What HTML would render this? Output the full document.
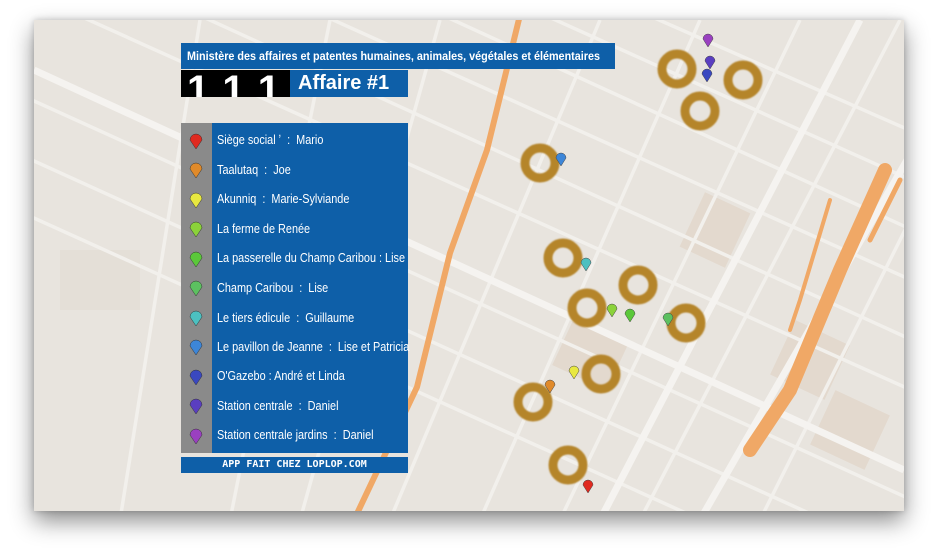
<!DOCTYPE html>
<html><head><meta charset="utf-8"><style>
html,body{margin:0;width:939px;height:559px;overflow:hidden}
body{background:#fff;font-family:"Liberation Sans",sans-serif;position:relative}
#win{position:absolute;left:34px;top:20px;width:870px;height:491px;overflow:hidden;background:#e9e5df;box-shadow:0 10px 22px rgba(0,0,0,.45),0 0 6px rgba(0,0,0,.2)}
svg{position:absolute;left:0;top:0}
.bl{position:absolute;background:#0e5fa8;color:#fff;white-space:nowrap;overflow:hidden}
.t{font-weight:bold}
.row{position:absolute;left:217px;color:#fff;font-size:12.5px;white-space:nowrap;transform:scaleX(.87);transform-origin:0 0;line-height:15px}
</style></head><body>
<div id="win">
<svg width="870" height="491" viewBox="34 20 870 491">
<defs><filter id="b"><feGaussianBlur stdDeviation="0.9"/></filter></defs>
<rect x="34" y="20" width="870" height="491" fill="#e8e4de"/>
<g fill="#e3d9ce">
<rect x="560" y="330" width="60" height="50" transform="rotate(25 590 355)"/>
<rect x="780" y="330" width="60" height="60" transform="rotate(25 810 360)"/>
<rect x="690" y="200" width="50" height="60" transform="rotate(25 715 230)"/>
<rect x="820" y="400" width="60" height="60" transform="rotate(25 850 430)"/>
<rect x="60" y="250" width="80" height="60" fill="#e4dfd7"/>
</g>
<g stroke="#f2f0ec" stroke-width="3.5" fill="none">
<path d="M-100,40 L1000,540"/><path d="M-100,100 L1000,600"/><path d="M0,-20 L1000,430"/>
<path d="M100,-30 L1000,380"/><path d="M200,-40 L1000,320"/><path d="M300,-50 L1000,270"/>
<path d="M-50,180 L900,610"/><path d="M400,-50 L1000,220"/><path d="M500,-50 L1000,170"/>
<path d="M900,20 L640,520"/><path d="M800,20 L560,520"/><path d="M700,20 L480,520"/>
<path d="M600,20 L390,520"/><path d="M980,80 L760,520"/><path d="M440,20 L300,520"/>
<path d="M330,20 L230,520"/><path d="M200,20 L120,520"/>
</g>
<g stroke="#f5f3f0" stroke-width="7" fill="none">
<path d="M34,70 L904,470"/><path d="M860,20 L600,520"/><path d="M930,120 L700,520"/>
</g>
<g stroke="#f0a866" fill="none" stroke-linecap="round">
<path d="M520,15 L487,150 L450,253 L417,387 L354,520" stroke-width="6"/>
<path d="M885,170 L840,270 L790,390 L750,450" stroke-width="14"/>
<path d="M900,180 L870,240" stroke-width="5"/>
<path d="M830,200 L800,300 L790,330" stroke-width="4"/>
</g>
<g fill="none" stroke="#b5852c" stroke-width="9" filter="url(#b)">
<circle cx="540" cy="163" r="15"/><circle cx="563" cy="258" r="15"/><circle cx="638" cy="285" r="15"/>
<circle cx="587" cy="308" r="15"/><circle cx="686" cy="323" r="15"/><circle cx="601" cy="374" r="15"/>
<circle cx="533" cy="402" r="15"/><circle cx="568" cy="465" r="15"/><circle cx="677" cy="69" r="15"/>
<circle cx="743" cy="80" r="15"/><circle cx="700" cy="111" r="15"/>
</g>
<g stroke="#444" stroke-width=".5">
<path d="M561,166 l-5,-8 a5,5 0 1 1 10,0z" fill="#3d86d8"/>
<path d="M586,271 l-5,-8 a5,5 0 1 1 10,0z" fill="#4cc0c0"/>
<path d="M612,317 l-5,-8 a5,5 0 1 1 10,0z" fill="#8bd23a"/>
<path d="M630,322 l-5,-8 a5,5 0 1 1 10,0z" fill="#5bc83a"/>
<path d="M668,326 l-5,-8 a5,5 0 1 1 10,0z" fill="#5cc060"/>
<path d="M574,379 l-5,-8 a5,5 0 1 1 10,0z" fill="#e8e840"/>
<path d="M550,393 l-5,-8 a5,5 0 1 1 10,0z" fill="#e08a2a"/>
<path d="M588,493 l-5,-8 a5,5 0 1 1 10,0z" fill="#e02a20"/>
<path d="M708,47 l-5,-8 a5,5 0 1 1 10,0z" fill="#9a40c0"/>
<path d="M710,69 l-5,-8 a5,5 0 1 1 10,0z" fill="#5a3ec0"/>
<path d="M707,82 l-5,-8 a5,5 0 1 1 10,0z" fill="#3a48c0"/>
</g>
</svg>
<div class="bl" style="left:147px;top:23px;width:434px;height:26px;line-height:26px;padding-left:6px;box-sizing:border-box"><span class="t" style="display:inline-block;font-size:12px;transform:scaleX(.9);transform-origin:0 0">Ministère des affaires et patentes humaines, animales, végétales et élémentaires</span></div>
<div style="position:absolute;left:147px;top:50px;width:103px;height:27px;background:#000;color:#fff;font-weight:bold;font-size:40px;line-height:40px;overflow:hidden;padding-left:6px;letter-spacing:1px">1.1.1</div>
<div class="bl t" style="left:256px;top:50px;width:118px;height:27px;font-size:20px;line-height:27px;padding-left:8px;box-sizing:border-box">Affaire #1</div>
<div class="bl" style="left:147px;top:103px;width:227px;height:330px"></div>
<div style="position:absolute;left:147px;top:103px;width:31px;height:330px;background:#8a8a8a"></div>
<div class="bl" style="left:147px;top:437px;width:227px;height:16px;font-family:'DejaVu Sans Mono','Liberation Mono',monospace;font-size:10px;line-height:16px;text-align:center;font-weight:bold">APP FAIT CHEZ LOPLOP.COM</div>
<svg width="870" height="491" viewBox="34 20 870 491">
<g stroke="#333" stroke-width=".5">
<path d="M196,149 l-6,-9 a6,6 0 1 1 12,0z" fill="#e02a20"/>
<path d="M196,178 l-6,-9 a6,6 0 1 1 12,0z" fill="#e08a2a"/>
<path d="M196,208 l-6,-9 a6,6 0 1 1 12,0z" fill="#e8e840"/>
<path d="M196,237 l-6,-9 a6,6 0 1 1 12,0z" fill="#8bd23a"/>
<path d="M196,267 l-6,-9 a6,6 0 1 1 12,0z" fill="#5bc83a"/>
<path d="M196,296 l-6,-9 a6,6 0 1 1 12,0z" fill="#5cc060"/>
<path d="M196,326 l-6,-9 a6,6 0 1 1 12,0z" fill="#4cc0c0"/>
<path d="M196,355 l-6,-9 a6,6 0 1 1 12,0z" fill="#3d86d8"/>
<path d="M196,385 l-6,-9 a6,6 0 1 1 12,0z" fill="#3a48c0"/>
<path d="M196,414 l-6,-9 a6,6 0 1 1 12,0z" fill="#5a3ec0"/>
<path d="M196,444 l-6,-9 a6,6 0 1 1 12,0z" fill="#9a40c0"/>
</g>
</svg>
</div>
<div class="row" style="top:133px">Siège social ʼ &nbsp;: &nbsp;Mario</div>
<div class="row" style="top:163px">Taalutaq &nbsp;: &nbsp;Joe</div>
<div class="row" style="top:192px">Akunniq &nbsp;: &nbsp;Marie-Sylviande</div>
<div class="row" style="top:222px">La ferme de Renée</div>
<div class="row" style="top:251px">La passerelle du Champ Caribou : Lise</div>
<div class="row" style="top:281px">Champ Caribou &nbsp;: &nbsp;Lise</div>
<div class="row" style="top:311px">Le tiers édicule &nbsp;: &nbsp;Guillaume</div>
<div class="row" style="top:340px">Le pavillon de Jeanne &nbsp;: &nbsp;Lise et Patricia</div>
<div class="row" style="top:369px">O'Gazebo : André et Linda</div>
<div class="row" style="top:399px">Station centrale &nbsp;: &nbsp;Daniel</div>
<div class="row" style="top:428px">Station centrale jardins &nbsp;: &nbsp;Daniel</div>
</body></html>
